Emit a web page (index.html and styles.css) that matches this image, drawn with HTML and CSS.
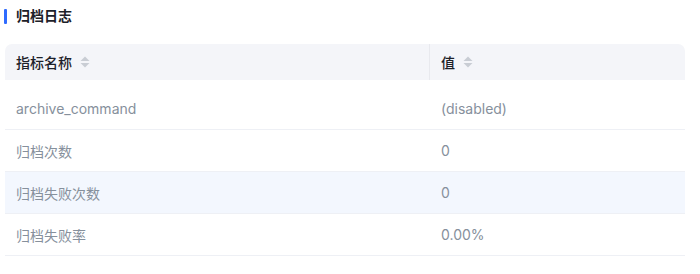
FILE: index.html
```html
<!DOCTYPE html>
<html lang="zh">
<head>
<meta charset="utf-8">
<link rel="stylesheet" href="styles.css">
</head>
<body>
<div class="panel">
  <div class="title"><span class="bar"></span><span class="title-text">归档日志</span></div>
  <div class="table">
    <div class="thead">
      <div class="th col1">指标名称<span class="sort"><svg width="10" height="14" viewBox="0 0 10 14"><path d="M5 1.5 L9.5 6 L0.5 6 Z" fill="#c9cdd4"/><path d="M5 12.5 L9.5 8 L0.5 8 Z" fill="#c9cdd4"/></svg></span></div>
      <div class="th col2">值<span class="sort"><svg width="10" height="14" viewBox="0 0 10 14"><path d="M5 1.5 L9.5 6 L0.5 6 Z" fill="#c9cdd4"/><path d="M5 12.5 L9.5 8 L0.5 8 Z" fill="#c9cdd4"/></svg></span></div>
    </div>
    <div class="row first"><div class="td col1">archive_command</div><div class="td col2">(disabled)</div></div>
    <div class="row"><div class="td col1">归档次数</div><div class="td col2">0</div></div>
    <div class="row striped"><div class="td col1">归档失败次数</div><div class="td col2">0</div></div>
    <div class="row"><div class="td col1">归档失败率</div><div class="td col2">0.00%</div></div>
  </div>
</div>
</body>
</html>
```
FILE: styles.css
```css
* { box-sizing: border-box; }
html, body { margin: 0; padding: 0; background: #fff; }
body {
  font-family: "Inter", "Noto Sans CJK SC", sans-serif;
  width: 700px;
  height: 274px;
  overflow: hidden;
}
.panel { padding: 8px 0 0 4px; }
.title { display: flex; align-items: center; height: 16px; }
.bar { width: 3px; height: 15px; background: #2f6bff; border-radius: 1px; }
.title-text {
  margin-left: 9px;
  font-size: 14px;
  font-weight: 700;
  color: #1d2129;
  line-height: 16px;
}
.table { margin: 20px 0 0 1px; width: 680px; }
.thead {
  display: flex;
  height: 36px;
  background: #f4f5f9;
  border-radius: 7px 7px 0 0;
  align-items: stretch;
}
.th {
  display: flex;
  align-items: center;
  font-size: 14px;
  font-weight: 500;
  color: #1d2129;
  padding-left: 11px;
}
.th.col2 { border-left: 1px solid #e8e9ee; }
.th .sort { margin-left: 8px; display: flex; align-items: center; }
.col1 { width: 424px; }
.col2 { flex: 1; }
.row {
  display: flex;
  height: 42px;
  border-bottom: 1px solid #eef0f5;
  align-items: center;
}
.row.first { height: 50px; padding-top: 7px; }
.row.striped { background: #f3f7fe; }
.td {
  font-size: 14px;
  color: #86909c;
  padding-left: 11px;
}
.td.col2 { padding-left: 12px; }
```
